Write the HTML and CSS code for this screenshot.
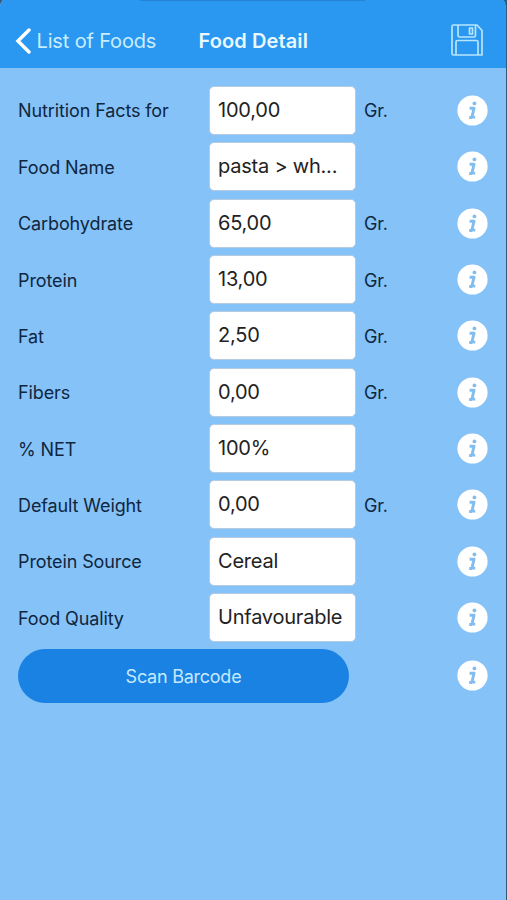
FILE: index.html
```html
<!DOCTYPE html>
<html lang="en">
<head>
<meta charset="utf-8">
<title>Food Detail</title>
<link rel="stylesheet" href="styles.css">
</head>
<body>
<svg class="defs" aria-hidden="true">
  <symbol id="info" viewBox="0 0 32 32">
    <circle cx="16" cy="16" r="15.6" fill="#fff"/>
    <circle cx="18" cy="8.7" r="2" fill="#83bdf0"/>
    <path d="M13 13.6h4.6l-2.2 9.2h3.4M12.6 23.2h3" fill="none" stroke="#83bdf0" stroke-width="3" stroke-linejoin="round"/>
  </symbol>
</svg>
<div class="screen">
  <header class="navbar">
    <a class="back">
      <svg class="chevron" viewBox="0 0 16 26"><path d="M14 2 3 13l11 11" fill="none" stroke="#fff" stroke-width="3.5" stroke-linecap="round"/></svg>
      <span class="back-label">List of Foods</span>
    </a>
    <h1 class="title">Food Detail</h1>
    <svg class="save" viewBox="0 0 32 32" fill="none" stroke="#b8e6ff" stroke-width="1.7" stroke-linejoin="round">
      <path d="M2.500 1H26l5 5.500V31H2.500Q1 31 1 29.500V2.500Q1 1 2.500 1Z"/>
      <path d="M7 1v10.500q0 1.500 1.500 1.500h14.500q1.500 0 1.500-1.500V1M5 31V18q0-1.500 1.500-1.500h19q1.500 0 1.500 1.500v13"/>
      <rect x="18.500" y="4" width="3" height="6"/>
    </svg>
  </header>
  <main class="form">
    <div class="row"><span class="label">Nutrition Facts for</span><div class="field">100,00</div><span class="unit">Gr.</span><svg class="info"><use href="#info"/></svg></div>
    <div class="row"><span class="label">Food Name</span><div class="field">pasta &gt; wh...</div><svg class="info"><use href="#info"/></svg></div>
    <div class="row"><span class="label">Carbohydrate</span><div class="field">65,00</div><span class="unit">Gr.</span><svg class="info"><use href="#info"/></svg></div>
    <div class="row"><span class="label">Protein</span><div class="field">13,00</div><span class="unit">Gr.</span><svg class="info"><use href="#info"/></svg></div>
    <div class="row"><span class="label">Fat</span><div class="field">2,50</div><span class="unit">Gr.</span><svg class="info"><use href="#info"/></svg></div>
    <div class="row"><span class="label">Fibers</span><div class="field">0,00</div><span class="unit">Gr.</span><svg class="info"><use href="#info"/></svg></div>
    <div class="row"><span class="label">% NET</span><div class="field">100%</div><svg class="info"><use href="#info"/></svg></div>
    <div class="row"><span class="label">Default Weight</span><div class="field">0,00</div><span class="unit">Gr.</span><svg class="info"><use href="#info"/></svg></div>
    <div class="row"><span class="label">Protein Source</span><div class="field">Cereal</div><svg class="info"><use href="#info"/></svg></div>
    <div class="row"><span class="label">Food Quality</span><div class="field">Unfavourable</div><svg class="info"><use href="#info"/></svg></div>
    <div class="scan-row"><button class="scan">Scan Barcode</button><svg class="info"><use href="#info"/></svg></div>
  </main>
</div>
</body>
</html>
```

FILE: styles.css
```css
* { box-sizing: border-box; }
body {
  margin: 0;
  font-family: Inter, "Liberation Sans", sans-serif;
  background: #385878;
}
.defs { position: absolute; width: 0; height: 0; }
.screen {
  width: 506px;
  height: 900px;
  background: #85c2f8;
  border-radius: 4px 3px 0 0 / 8px 12px 0 0;
  overflow: hidden;
}
.navbar {
  display: flex;
  align-items: center;
  height: 68px;
  padding: 14px 23px 0 15px;
  background: linear-gradient(#2583d2, #2583d2) 140px 0 / 225px 1px no-repeat #2a97f0;
}
.back { display: flex; align-items: center; width: 183.5px; }
.chevron { width: 16px; height: 26px; margin-right: 5.5px; }
.back-label { color: #c9edff; font-size: 20px; letter-spacing: -0.15px; line-height: 26px; white-space: nowrap; }
.title { margin: 0; color: #e9f8ff; font-size: 20px; font-weight: 600; letter-spacing: 0.1px; line-height: 26px; white-space: nowrap; }
.save { width: 32px; height: 32px; margin: -2px 0 0 auto; }
.form { padding: 14.3px 18px 0; }
.row {
  display: grid;
  grid-template-columns: 191px 146.5px 1fr 31px;
  align-items: center;
  height: 56.35px;
}
.label, .unit {
  padding-top: 2px;
  color: #10263f;
  font-size: 18px;
  letter-spacing: -0.11px;
  line-height: 24px;
  white-space: nowrap;
}
.field {
  height: 49px;
  padding: 0 0 0 8px;
  border: 1px solid #b3cbe3;
  border-radius: 5px;
  background: #fff;
  color: #222;
  font-size: 20px;
  letter-spacing: -0.22px;
  line-height: 46px;
  white-space: nowrap;
}
.unit { padding-left: 8.5px; }
.info { grid-column: 4; width: 31px; height: 31px; }
.scan-row { display: flex; justify-content: space-between; align-items: center; height: 54px; margin-top: 3.2px; }
.scan {
  width: 331px;
  height: 54px;
  padding: 1px 0 0;
  border: 0;
  border-radius: 27px;
  background: #1a82e3;
  color: #c4e9ff;
  font: 18px/53px Inter, "Liberation Sans", sans-serif;
  letter-spacing: -0.25px;
}
```
